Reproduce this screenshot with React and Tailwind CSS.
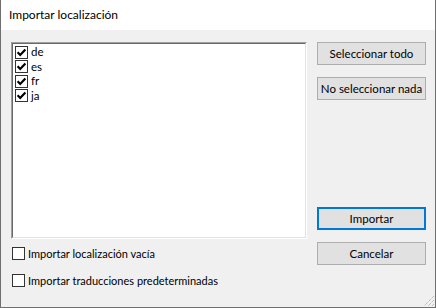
import React from "react";

const font = { fontFamily: 'Lato, "Noto Sans", sans-serif' };

function Check({ checked }) {
  return (
    <svg width="13" height="13" viewBox="0 0 13 13" className="shrink-0">
      <rect x="0.5" y="0.5" width="12" height="12" fill="#fff" stroke="#333" />
      {checked && (
        <polyline
          points="2.6,6.3 5.2,9 10.4,3.4"
          fill="none"
          stroke="#000"
          strokeWidth="2.2"
        />
      )}
    </svg>
  );
}

function Button({ children, primary, className = "" }) {
  return (
    <button
      className={
        (primary
          ? "block h-[23px] w-[109px] whitespace-nowrap bg-[#e1e1e1] border-2 border-[#0078d7] text-[11.5px] leading-[15px] text-black "
          : "block h-[23px] w-[109px] whitespace-nowrap bg-[#e1e1e1] border border-[#adadad] text-[11.5px] leading-[15px] text-black ") +
        className
      }
    >
      {children}
    </button>
  );
}

function Grip() {
  return (
    <svg width="12" height="12" viewBox="0 0 12 12" className="absolute right-0 bottom-0">
      <path d="M11 1 L1 11" stroke="#a6a6a6" strokeWidth="1" strokeDasharray="1 1" />
      <path d="M11 5 L5 11" stroke="#a6a6a6" strokeWidth="1" strokeDasharray="1 1" />
      <path d="M11 9 L9 11" stroke="#a6a6a6" strokeWidth="1" strokeDasharray="1 1" />
    </svg>
  );
}

export default function App() {
  const langs = ["de", "es", "fr", "ja"];

  return (
    <div className="w-[436px] h-[308px] bg-white overflow-hidden" style={font}>
      <div className="relative w-full h-full flex flex-col border-x border-b border-[#6f6f6f]">
        <div className="h-[30px] shrink-0 bg-white flex items-center pl-[8px] text-[12px] text-black">
          Importar localización
        </div>

        <div className="flex-1 bg-[#f0f0f0] flex gap-[10px] pl-[10px] pt-[12px]">
          <div className="w-[296px] flex flex-col">
            <div className="h-[197px] border border-t-[#a0a0a0] border-l-[#a0a0a0] border-b-white border-r-white">
              <div className="h-full bg-white border border-t-[#696969] border-l-[#696969] border-b-[#e3e3e3] border-r-[#e3e3e3] pt-[1px] pl-[2px]">
                {langs.map((l) => (
                  <div key={l} className="h-[14.5px] flex items-center gap-[3px] text-[11.5px] leading-[14px] text-black">
                    <Check checked />
                    <span>{l}</span>
                  </div>
                ))}
              </div>
            </div>

            <label className="mt-[7px] h-[15px] flex items-center gap-[3px] pl-[1px] text-[11px] leading-[15px] text-black">
              <Check />
              <span>Importar localización vacía</span>
            </label>
            <label className="mt-[12px] h-[15px] flex items-center gap-[3px] pl-[1px] text-[11px] leading-[15px] text-black">
              <Check />
              <span>Importar traducciones predeterminadas</span>
            </label>
          </div>

          <div className="flex flex-col">
            <Button>Seleccionar todo</Button>
            <Button className="mt-[12px]">No seleccionar nada</Button>
            <Button primary className="mt-[107px]">Importar</Button>
            <Button className="mt-[12px]">Cancelar</Button>
          </div>
        </div>

        <Grip />
      </div>
    </div>
  );
}
